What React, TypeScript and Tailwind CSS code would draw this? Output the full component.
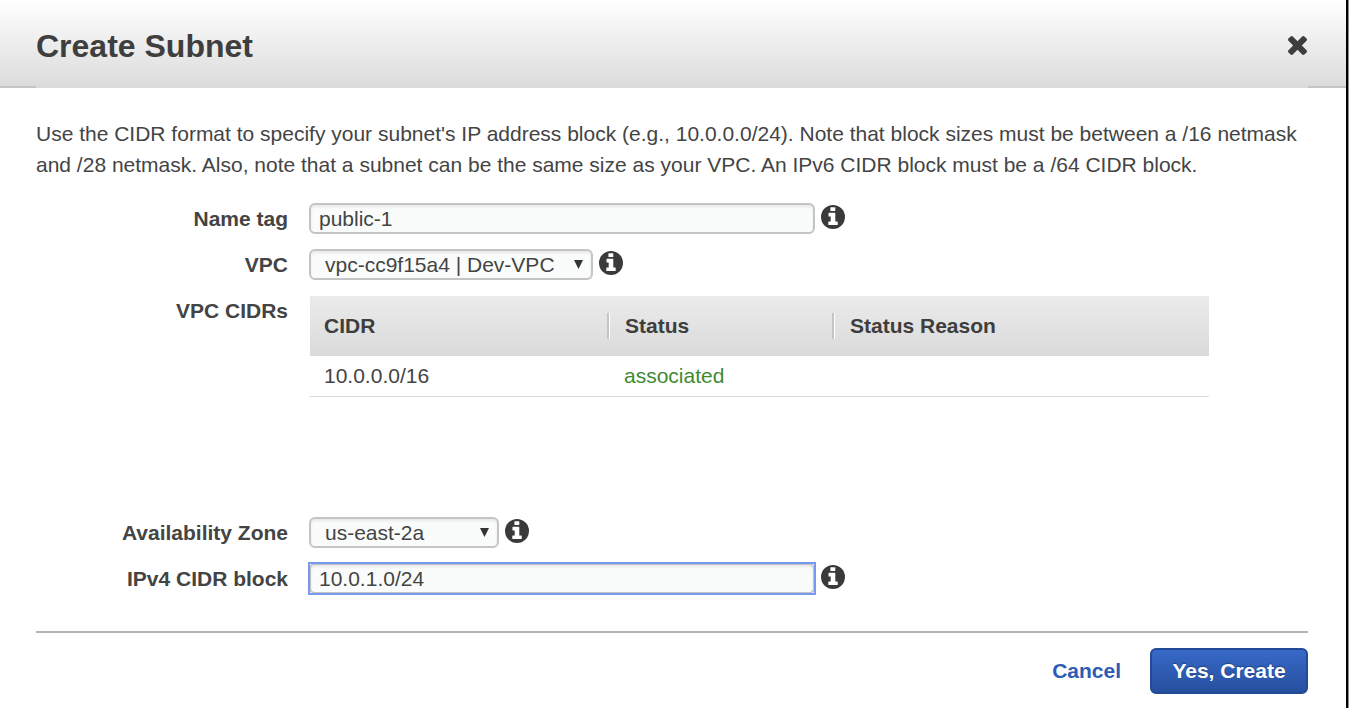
import { useState } from "react";
import type { ReactNode } from "react";

const FIELD =
  "h-[31px] max-w-full rounded-md border-2 border-[#c4c4c4] bg-[#fafcfb] text-[21px] leading-[27px] text-[#444444] shadow-[inset_0_2px_3px_rgba(0,0,0,0.08)]";

function InfoIcon() {
  return (
    <svg viewBox="0 0 24 24" className="size-6 shrink-0" aria-hidden="true">
      <circle cx="12" cy="12" r="12" fill="#3a3a3a" />
      <path
        fill="#ffffff"
        d="M9.9 2.2h3.9q.5 0 .5.5v2.9q0 .5-.5.5H9.9q-.5 0-.5-.5V2.7q0-.5.5-.5zM8 7.8h5.8q.5 0 .5.5v8.3h1.9q.5 0 .5.5v2.5q0 .5-.5.5H7.8q-.5 0-.5-.5v-2.5q0-.5.5-.5h1.9v-5.1H8q-.5 0-.5-.5V8.3q0-.5.5-.5z"
      />
    </svg>
  );
}

function CloseIcon() {
  return (
    <svg viewBox="302 366 1188 1188" className="size-[19px] fill-[#3e3e3e]" aria-hidden="true">
      <path d="M1490 1322q0 40-28 68l-136 136q-28 28-68 28t-68-28l-294-294-294 294q-28 28-68 28t-68-28l-136-136q-28-28-28-68t28-68l294-294-294-294q-28-28-28-68t28-68l136-136q28-28 68-28t68 28l294 294 294-294q28-28 68-28t68 28l136 136q28 28 28 68t-28 68l-294 294 294 294q28 28 28 68z" />
    </svg>
  );
}

function Label({ htmlFor, children }: { htmlFor: string; children: ReactNode }) {
  return (
    <label htmlFor={htmlFor} className="text-right font-bold leading-[31px]">
      {children}
    </label>
  );
}

function WithInfo({ children }: { children: ReactNode }) {
  return (
    <div className="flex items-start gap-1.5">
      {children}
      <span className="pt-0.5">
        <InfoIcon />
      </span>
    </div>
  );
}

function Select({ id, width, option }: { id: string; width: string; option: string }) {
  return (
    <div className={`relative ${width}`}>
      <select id={id} className={`${FIELD} block w-full appearance-none pl-3.5 pr-8 outline-none`}>
        <option>{option}</option>
      </select>
      <svg
        viewBox="0 0 9 9"
        className="pointer-events-none absolute right-2.5 top-[11px] size-[9px] fill-[#333333]"
        aria-hidden="true"
      >
        <path d="M0 0h9L4.5 9z" />
      </svg>
    </div>
  );
}

function HeadCell({ children }: { children: ReactNode }) {
  return (
    <th scope="col" className="p-0 text-left">
      <div className="border-l-2 border-[#c4c4c4] leading-[26px] shadow-[inset_1px_0_0_#ffffff] pl-4">
        {children}
      </div>
    </th>
  );
}

export default function App() {
  const [name, setName] = useState("public-1");
  const [cidr, setCidr] = useState("10.0.1.0/24");

  return (
    <div className="min-h-screen bg-[#8a8a8a] pr-px font-['Liberation_Sans',Arial,sans-serif] text-[21px] text-[#444444]">
      <main className="min-h-screen border-r-2 border-black bg-white">
        <header className="bg-linear-to-b from-white to-[#dbdbdb]">
          <div className="flex h-[86px] items-center justify-between pl-9 pr-[39px] pt-1">
            <h1 className="pt-0.5 text-[32px] font-bold leading-10 text-[#3e3e3e]">Create Subnet</h1>
            <button type="button" aria-label="Close">
              <CloseIcon />
            </button>
          </div>
          <div className="flex h-0.5 justify-between">
            <span className="w-9 bg-[#c4c4c4]" />
            <span className="w-[38px] bg-[#c4c4c4]" />
          </div>
        </header>

        <form className="pl-9 pr-[38px] pt-[30px]" onSubmit={(e) => e.preventDefault()}>
          <p className="leading-[31px]">
            Use the CIDR format to specify your subnet's IP address block (e.g., 10.0.0.0/24). Note that
            block sizes must be between a /16 netmask and /28 netmask. Also, note that a subnet can be the
            same size as your VPC. An IPv6 CIDR block must be a /64 CIDR block.
          </p>

          <div className="mt-[23px] grid grid-cols-[252px_minmax(0,1fr)] gap-x-[21px] gap-y-[15px]">
            <Label htmlFor="name">Name tag</Label>
            <WithInfo>
              <input
                id="name"
                type="text"
                value={name}
                onChange={(e) => setName(e.target.value)}
                className={`${FIELD} w-[506px] px-2 outline-none`}
              />
            </WithInfo>

            <Label htmlFor="vpc">VPC</Label>
            <WithInfo>
              <Select id="vpc" width="w-[284px]" option="vpc-cc9f15a4 | Dev-VPC" />
            </WithInfo>

            <span id="cidrs" className="text-right font-bold leading-[31px]">
              VPC CIDRs
            </span>
            <div className="min-h-[207px] pl-px pt-px">
              <table aria-labelledby="cidrs" className="w-[899px] max-w-full table-fixed border-collapse">
                <colgroup>
                  <col className="w-[297px]" />
                  <col className="w-[225px]" />
                  <col />
                </colgroup>
                <thead>
                  <tr className="h-[60px] bg-linear-to-b from-[#ebebeb] to-[#dadada] text-[#3e3e3e]">
                    <th scope="col" className="py-0 pl-3.5 pr-0 text-left leading-[26px]">
                      CIDR
                    </th>
                    <HeadCell>Status</HeadCell>
                    <HeadCell>Status Reason</HeadCell>
                  </tr>
                </thead>
                <tbody>
                  <tr className="h-10 border-b border-[#dadada] leading-[26px]">
                    <td className="py-0 pl-3.5">10.0.0.0/16</td>
                    <td className="py-0 pl-[17px] text-[#3f8a32]">associated</td>
                    <td />
                  </tr>
                </tbody>
              </table>
            </div>

            <Label htmlFor="zone">Availability Zone</Label>
            <WithInfo>
              <Select id="zone" width="w-[190px]" option="us-east-2a" />
            </WithInfo>

            <Label htmlFor="block">IPv4 CIDR block</Label>
            <WithInfo>
              <div className="flex bg-white outline-2 -outline-offset-1 outline-[#7499ee]">
                <input
                  id="block"
                  type="text"
                  value={cidr}
                  onChange={(e) => setCidr(e.target.value)}
                  className={`${FIELD} w-[506px] px-2 outline-none`}
                />
              </div>
            </WithInfo>
          </div>

          <div className="mt-[37px] flex items-center justify-end gap-[29px] border-t-2 border-[#b3b3b3] pt-[15px]">
            <a href="#cancel" className="font-bold text-[#2e5bb3]">
              Cancel
            </a>
            <button
              type="submit"
              className="h-[46px] w-[158px] rounded-md border-2 border-[#234a96] bg-linear-to-b from-[#3769c8] to-[#26509f] font-bold text-white [text-shadow:0_-1px_1px_rgba(0,0,0,0.3)]"
            >
              Yes, Create
            </button>
          </div>
        </form>
      </main>
    </div>
  );
}
